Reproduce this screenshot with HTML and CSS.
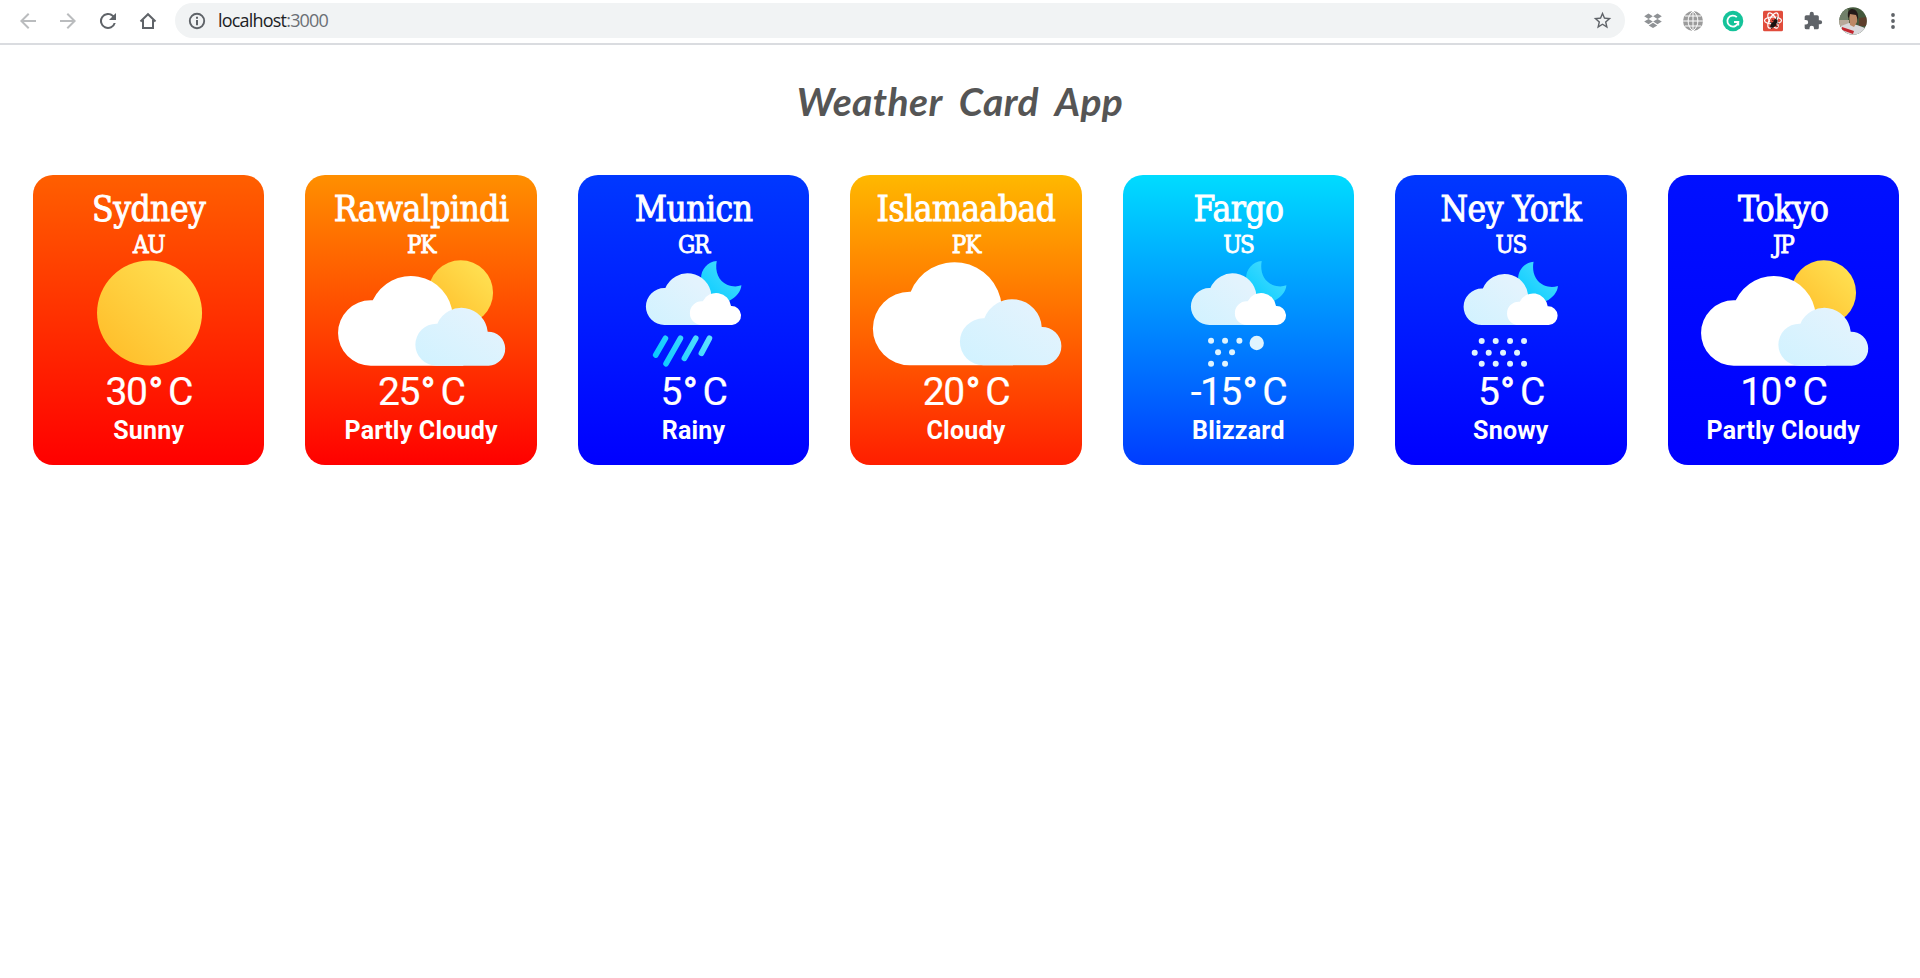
FILE: index.html
```html
<!DOCTYPE html>
<html lang="en">
<head>
<meta charset="utf-8">
<title>Weather Card App</title>
<link rel="stylesheet" href="styles.css">
</head>
<body>
<svg class="defs" aria-hidden="true">
  <defs>
    <linearGradient id="sun" x1="0" y1="1" x2="1" y2="0"><stop offset=".15" stop-color="#ffc02d"/><stop offset=".85" stop-color="#ffdf50"/></linearGradient>
    <linearGradient id="ice" x1="0" y1="1" x2="1" y2="0"><stop offset="0" stop-color="#d0f2ff"/><stop offset=".8" stop-color="#e3f3fd"/></linearGradient>
    <linearGradient id="moon" x1="0" y1="1" x2="1" y2="0"><stop offset=".1" stop-color="#0bcdff"/><stop offset=".9" stop-color="#4dddff"/></linearGradient>
    <linearGradient id="rain" gradientUnits="userSpaceOnUse" x1="264" y1="600" x2="442" y2="520"><stop offset="0" stop-color="#00c8ff"/><stop offset="1" stop-color="#62e2ff"/></linearGradient>
    <g id="partly">
      <circle cx="512" cy="383" r="97" fill="url(#sun)"/>
      <path fill="#fff" d="M242 602A98 98 0 0 1 242 406L248 406A126 126 0 0 1 488 450L520 602Z"/>
      <path fill="url(#ice)" d="M439 602A62.500 62.500 0 0 1 439 476L442 476A79 79 0 0 1 593 500A51 51 0 0 1 596 602Z"/>
    </g>
    <g id="night">
      <path fill="url(#moon)" d="M455 288C449 320 461 348 486 359C501 365 515 366 529 361C528 379 513 398 493 407L430 400L408 340C408 314 427 290 455 288Z"/>
      <path fill="url(#ice)" d="M298 480A55.500 55.500 0 0 1 298 369L301 369A72 72 0 0 1 439 390L440 480Z"/>
      <path fill="#fff" d="M410 480A35.500 35.500 0 0 1 410 409L413 409A45 45 0 0 1 498 423A28.500 28.500 0 0 1 501 480Z"/>
    </g>
  </defs>
</svg>

<header class="toolbar">
  <span class="slot"><svg class="icon muted" viewBox="0 0 24 24"><path d="M20 11H7.830l5.590-5.590L12 4l-8 8 8 8 1.410-1.410L7.830 13H20z"/></svg></span>
  <span class="slot"><svg class="icon muted" viewBox="0 0 24 24"><path d="M4 11h12.170l-5.590-5.590L12 4l8 8-8 8-1.410-1.410L16.170 13H4z"/></svg></span>
  <span class="slot"><svg class="icon" viewBox="0 0 24 24"><path d="M17.650 6.350A8 8 0 1 0 19.730 14h-2.080A6 6 0 1 1 12 6c1.660 0 3.140.69 4.220 1.780L13 11h7V4z"/></svg></span>
  <span class="slot"><svg class="icon" viewBox="0 0 24 24"><path fill="none" stroke="#5f6368" stroke-width="2" d="M4.500 12.500L12 5.200l7.500 7.300M7 11v8h10v-8"/></svg></span>
  <div class="address">
    <svg class="icon" viewBox="0 0 24 24"><circle cx="12" cy="12" r="7.200" fill="none" stroke="#5f6368" stroke-width="1.900"/><path d="M11 7.700h2v2h-2zM11 11h2v5.300h-2z"/></svg>
    <span class="url">localhost<span class="port">:3000</span></span>
    <svg class="icon star" viewBox="0 0 24 24"><path d="M22 9.240l-7.190-.62L12 2 9.190 8.630 2 9.240l5.460 4.730L5.820 21 12 17.270 18.180 21l-1.630-7.030zM12 15.400l-3.760 2.270 1-4.280-3.320-2.880 4.380-.38L12 6.100l1.710 4.040 4.380.38-3.320 2.880 1 4.280z"/></svg>
  </div>
  <span class="slot"><svg class="icon gray" viewBox="0 0 24 24"><path d="M7.500 4.500l4.300 2.700-4.300 2.700-4.300-2.700zM16.500 4.500l4.300 2.700-4.300 2.700-4.300-2.700zM7.500 9.900l4.300 2.700-4.300 2.700-4.300-2.700zM16.500 9.900l4.300 2.700-4.300 2.700-4.300-2.700zM12 13.700l4.300 2.700-4.300 2.700-4.300-2.700z"/></svg></span>
  <span class="slot"><svg class="icon" viewBox="0 0 24 24"><circle cx="12" cy="12" r="10" fill="#9b9b9b"/><path fill="none" stroke="#fff" stroke-width="1" d="M12 2v20M2 12h20M4 7h16M4 17h16M12 2C5.500 7 5.500 17 12 22M12 2c6.500 5 6.500 15 0 20"/></svg></span>
  <span class="slot"><svg class="icon" viewBox="0 0 24 24"><circle cx="12" cy="12" r="10.300" fill="#15c39a"/><path fill="none" stroke="#fff" stroke-width="1.800" d="M15.800 8.200A5.500 5.500 0 1 0 17.300 13H13M17.300 12.500V16.500"/></svg></span>
  <span class="slot"><svg class="icon" viewBox="0 0 24 24"><rect x="2" y="1.700" width="20" height="20.600" rx="1.500" fill="#e14c3c"/><g fill="none" stroke="#fff" stroke-width="1.200"><ellipse cx="12" cy="11.500" rx="8.500" ry="3.500"/><ellipse cx="12" cy="11.500" rx="8.500" ry="3.500" transform="rotate(60 12 11.500)"/><ellipse cx="12" cy="11.500" rx="8.500" ry="3.500" transform="rotate(120 12 11.500)"/></g><g fill="#181210"><ellipse cx="12.500" cy="15.500" rx="2.400" ry="3.600" transform="rotate(40 12.500 15.500)"/><circle cx="14.700" cy="12" r="2"/></g><path stroke="#181210" stroke-width=".8" fill="none" d="M9 13l8 5M11 11l7 4M9 17l2 3M15 10l1-2"/></svg></span>
  <span class="slot"><svg class="icon puzzle" viewBox="0 0 24 24"><path d="M20.500 11H19V7a2 2 0 0 0-2-2h-4V3.500a2.500 2.500 0 0 0-5 0V5H4a2 2 0 0 0-2 2v3.800h1.500a2.700 2.700 0 0 1 0 5.400H2V20a2 2 0 0 0 2 2h3.800v-1.500a2.700 2.700 0 0 1 5.400 0V22H17a2 2 0 0 0 2-2v-4h1.500a2.500 2.500 0 0 0 0-5z"/></svg></span>
  <span class="slot"><svg class="avatar" viewBox="0 0 28 28"><clipPath id="face"><circle cx="14" cy="14" r="13.700"/></clipPath><g clip-path="url(#face)"><path fill="#44583c" d="M0 0h28v28H0z"/><path fill="#71806a" d="M0 0h9v13H0z"/><path fill="#b7a99a" d="M0 13h10v7H0z"/><path fill="#5d3e2b" d="M20 11l8-1v9h-8z"/><path fill="#d9d9dc" d="M2 19l8-3 8 2 8 3v7H2z"/><path fill="#bd8966" d="M10 6h8v9l-3 5-4-2z"/><path fill="#241a18" d="M9 10c-2-11 12-11 10 3l-2-5-6-1-1 4z"/><path fill="#c3272f" d="M3 20l12 4-1 3-11-4z"/></g></svg></span>
  <span class="slot"><svg class="icon" viewBox="0 0 24 24"><circle cx="12" cy="6" r="1.900"/><circle cx="12" cy="12" r="1.900"/><circle cx="12" cy="18" r="1.900"/></svg></span>
</header>

<main>
  <h1 class="title">Weather Card App</h1>
  <div class="cards">
    <article class="card sydney">
      <h2 class="city">Sydney</h2><p class="country">AU</p>
      <svg class="weather" viewBox="39 279 694 330"><circle cx="388.500" cy="444" r="157.500" fill="url(#sun)"/></svg>
      <p class="temp">30<span class="deg">°</span>C</p><p class="condition">Sunny</p>
    </article>
    <article class="card rawalpindi">
      <h2 class="city">Rawalpindi</h2><p class="country">PK</p>
      <svg class="weather" viewBox="45 279 694 330"><use href="#partly"/></svg>
      <p class="temp">25<span class="deg">°</span>C</p><p class="condition">Partly Cloudy</p>
    </article>
    <article class="card munich">
      <h2 class="city">Municn</h2><p class="country">GR</p>
      <svg class="weather" viewBox="39 279 694 330"><use href="#night"/><path fill="none" stroke="url(#rain)" stroke-width="17" stroke-linecap="round" d="M301 520L272 570M346 520L303 596M392 520L358 580M433 520L409 565"/></svg>
      <p class="temp">5<span class="deg">°</span>C</p><p class="condition">Rainy</p>
    </article>
    <article class="card islamabad">
      <h2 class="city">Islamaabad</h2><p class="country">PK</p>
      <svg class="weather" viewBox="31 279 694 330"><path fill="#fff" d="M210 601A110.500 110.500 0 0 1 210 380L213 380A142 142 0 0 1 486 422L520 601Z"/><path fill="url(#ice)" d="M431 601A70.500 70.500 0 0 1 431 460L434 460A89 89 0 0 1 606 486A57.500 57.500 0 0 1 609 601Z"/></svg>
      <p class="temp">20<span class="deg">°</span>C</p><p class="condition">Cloudy</p>
    </article>
    <article class="card fargo">
      <h2 class="city">Fargo</h2><p class="country">US</p>
      <svg class="weather" viewBox="39 279 694 330"><use href="#night"/><g fill="#dff4fe"><circle cx="303" cy="527" r="9"/><circle cx="345" cy="527" r="9"/><circle cx="388" cy="527" r="9"/><circle cx="324" cy="562" r="9"/><circle cx="366" cy="562" r="9"/><circle cx="303" cy="596" r="9"/><circle cx="345" cy="596" r="9"/><circle cx="440" cy="534" r="21.500"/></g></svg>
      <p class="temp">-15<span class="deg">°</span>C</p><p class="condition">Blizzard</p>
    </article>
    <article class="card newyork">
      <h2 class="city">Ney York</h2><p class="country">US</p>
      <svg class="weather" viewBox="31 279 694 330"><use href="#night" transform="translate(-3 6) scale(.988)"/><g fill="#dff4fe"><circle cx="291" cy="528" r="9"/><circle cx="333" cy="528" r="9"/><circle cx="376" cy="528" r="9"/><circle cx="418" cy="528" r="9"/><circle cx="270" cy="563" r="9"/><circle cx="312" cy="563" r="9"/><circle cx="355" cy="563" r="9"/><circle cx="397" cy="563" r="9"/><circle cx="291" cy="596" r="9"/><circle cx="333" cy="596" r="9"/><circle cx="376" cy="596" r="9"/><circle cx="418" cy="596" r="9"/></g></svg>
      <p class="temp">5<span class="deg">°</span>C</p><p class="condition">Snowy</p>
    </article>
    <article class="card tokyo">
      <h2 class="city">Tokyo</h2><p class="country">JP</p>
      <svg class="weather" viewBox="45 279 694 330"><use href="#partly"/></svg>
      <p class="temp">10<span class="deg">°</span>C</p><p class="condition">Partly Cloudy</p>
    </article>
  </div>
</main>
</body>
</html>
```
FILE: styles.css
```css
* { box-sizing: border-box; margin: 0; padding: 0; }
body { background: #fff; font-family: Roboto, sans-serif; }
.defs { display: block; width: 0; height: 0; }
.toolbar { display: flex; align-items: center; height: 45px; padding: 0 7px 2px 8px; border-bottom: 2px solid #dadce0; }
.slot { display: flex; flex: 0 0 40px; align-items: center; justify-content: center; height: 41px; }
.icon { display: block; flex: none; width: 24px; height: 24px; fill: #5f6368; }
.muted { fill: #babcbe; }
.gray { fill: #8f9295; }
.puzzle { width: 20px; height: 20px; }
.avatar { width: 28px; height: 28px; }
.address { display: flex; flex: 1; align-items: center; height: 35px; margin: 0 8px 0 7px; padding: 0 12px 0 10px; border-radius: 18px; background: #f1f3f4; }
.url { margin-left: 9px; color: #202124; font: 18px/35px "Open Sans", sans-serif; letter-spacing: -.8px; }
.port { color: #6b6f74; }
.star { width: 21px; height: 21px; margin-left: auto; }
.title { margin-top: 28px; color: #555; text-align: center; font: italic 700 39px/56px Lato, sans-serif; letter-spacing: .4px; word-spacing: 8px; }
.cards { display: grid; grid-template-columns: repeat(7, 1fr); column-gap: 41px; padding: 46px 21px 0 33px; }
.card { display: flex; flex-direction: column; align-items: center; height: 290px; padding-top: 10px; border-radius: 20px; color: #fff; white-space: nowrap; }
.city { font: 400 35px/48px "DejaVu Serif Condensed", "DejaVu Serif", serif; font-stretch: condensed; letter-spacing: -.5px; -webkit-text-stroke: .9px #fff; }
.country { font: 400 24px/25px "DejaVu Serif Condensed", "DejaVu Serif", serif; font-stretch: condensed; letter-spacing: -1.200px; -webkit-text-stroke: .8px #fff; }
.weather { display: block; flex: none; width: 100%; height: 110px; }
.temp { font-size: 39px; line-height: 48px; letter-spacing: -1.500px; -webkit-text-stroke: .2px #fff; }
.deg { margin: 0 5px 0 2px; letter-spacing: 0; -webkit-text-stroke: .8px #fff; }
.condition { font-size: 25px; font-weight: 700; line-height: 29px; letter-spacing: .2px; }
.sydney { background: linear-gradient(#ff5f00, #f00); }
.rawalpindi { background: linear-gradient(#ff8f00, #f00); }
.munich, .newyork { background: linear-gradient(#0038ff, #00f); }
.islamabad { background: linear-gradient(#ffb800, #ff1e00); }
.fargo { background: linear-gradient(#00dcff, #003cff); }
.tokyo { background: linear-gradient(#0010ff, #00f); }
```
